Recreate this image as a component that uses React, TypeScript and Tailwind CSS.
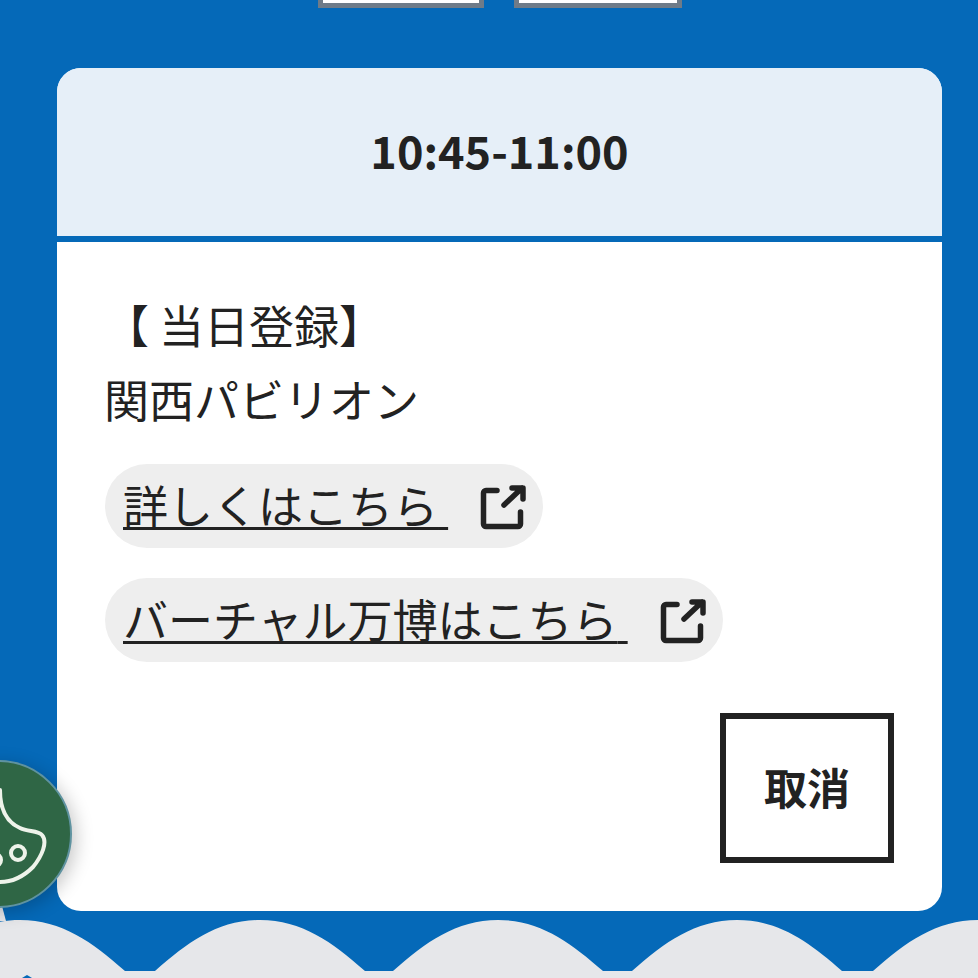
const font = { fontFamily: '"Noto Sans CJK JP", "Noto Sans", sans-serif' };

const peaks = [20, 260, 498, 737, 978];

function wavePath() {
  let d = "M-120 58 L-120 51";
  for (const p of peaks) {
    d += ` L${p - 105} 51 C${p - 72} 22 ${p - 42} 0 ${p} 0 C${p + 42} 0 ${p + 72} 22 ${p + 105} 51`;
  }
  return d + " L1100 51 L1100 58 Z";
}

function ExternalIcon() {
  return (
    <svg width="48" height="48" viewBox="0 0 48 48" fill="none" stroke="#222" strokeWidth="5.5" strokeLinecap="round" strokeLinejoin="round" className="shrink-0">
      <path d="M18 6.5H7A2.5 2.5 0 0 0 4.5 9V40A2.5 2.5 0 0 0 7 42.5H39A2.5 2.5 0 0 0 41.5 40V28" />
      <path d="M25 21L43 4M33 4H44V15" />
    </svg>
  );
}

function LinkPill({ label, width }: { label: string; width: string }) {
  return (
    <a className={`flex h-[84px] items-center rounded-[42px] bg-[#eeeeee] pl-[18px] text-[45px] leading-none text-[#222] ${width}`}>
      <span className="mb-[3px] underline decoration-[3px] underline-offset-[3px] whitespace-pre">{label} </span>
      <span className="ml-[31px] mt-[3px]"><ExternalIcon /></span>
    </a>
  );
}

export default function App() {
  return (
    <div className="relative h-[978px] w-[978px] overflow-hidden bg-[#0569b8]" style={font}>
      <div className="flex justify-center gap-[30px] pl-[22px]">
        <div className="h-[8px] w-[166px] border-x-[5px] border-b-[5px] border-[#6f7b88] bg-white" />
        <div className="h-[8px] w-[168px] border-x-[5px] border-b-[5px] border-[#6f7b88] bg-white" />
      </div>

      <section className="mx-[57px] mt-[60px] h-[843px] w-[885px] overflow-hidden rounded-[24px] bg-white">
        <div className="flex h-[174px] items-center justify-center border-b-[6px] border-[#0569b8] bg-[#e6eff8] pb-[4px] text-[45px] font-bold text-[#222]">
          10:45-11:00
        </div>
        <div className="px-[48px] pt-[46px] text-[#222]">
          <p className="-ml-px text-[45px] leading-[74px]">【 当日登録】</p>
          <p className="-ml-px text-[45px] leading-[74px]">関西パビリオン</p>
          <div className="mt-[28px] flex flex-col gap-[30px]">
            <LinkPill label="詳しくはこちら" width="w-[438px]" />
            <LinkPill label="バーチャル万博はこちら" width="w-[618px]" />
          </div>
          <div className="mt-[51px] flex justify-end">
            <button className="flex h-[150px] w-[174px] items-center justify-center border-[6px] border-[#222] pb-[4px] text-[43px] font-bold text-[#222]">
              取消
            </button>
          </div>
        </div>
      </section>

      <svg width="978" height="58" viewBox="0 0 978 58" className="mt-[9px] block">
        <path d={wavePath()} fill="#e6e7ea" />
        <path d="M22 58L27 55L32 58Z" fill="#0569b8" />
      </svg>

      <svg width="6" height="16" viewBox="0 0 6 16" className="absolute left-0 top-[906px]">
        <path d="M0 0H2L6 15H0Z" fill="#e6e7ea" />
      </svg>

      <div className="absolute left-[-76px] top-[760px] h-[148px] w-[148px] rounded-full border-2 border-[#5f93a0] bg-[#2f6645] shadow-[4px_4px_18px_rgba(0,0,0,0.22)]">
        <svg width="148" height="148" viewBox="0 0 148 148" fill="none" stroke="#eef3ea" strokeWidth="4" className="absolute left-[-2px] top-[-2px]">
          <path d="M76 30C76 48 82 62 96 68C104 72 114 70 118 75C124 82 118 96 109 107C100 116 88 122 76 122" strokeLinecap="round" />
          <circle cx="94" cy="93" r="7" />
          <circle cx="71" cy="100" r="6" />
        </svg>
      </div>
    </div>
  );
}
